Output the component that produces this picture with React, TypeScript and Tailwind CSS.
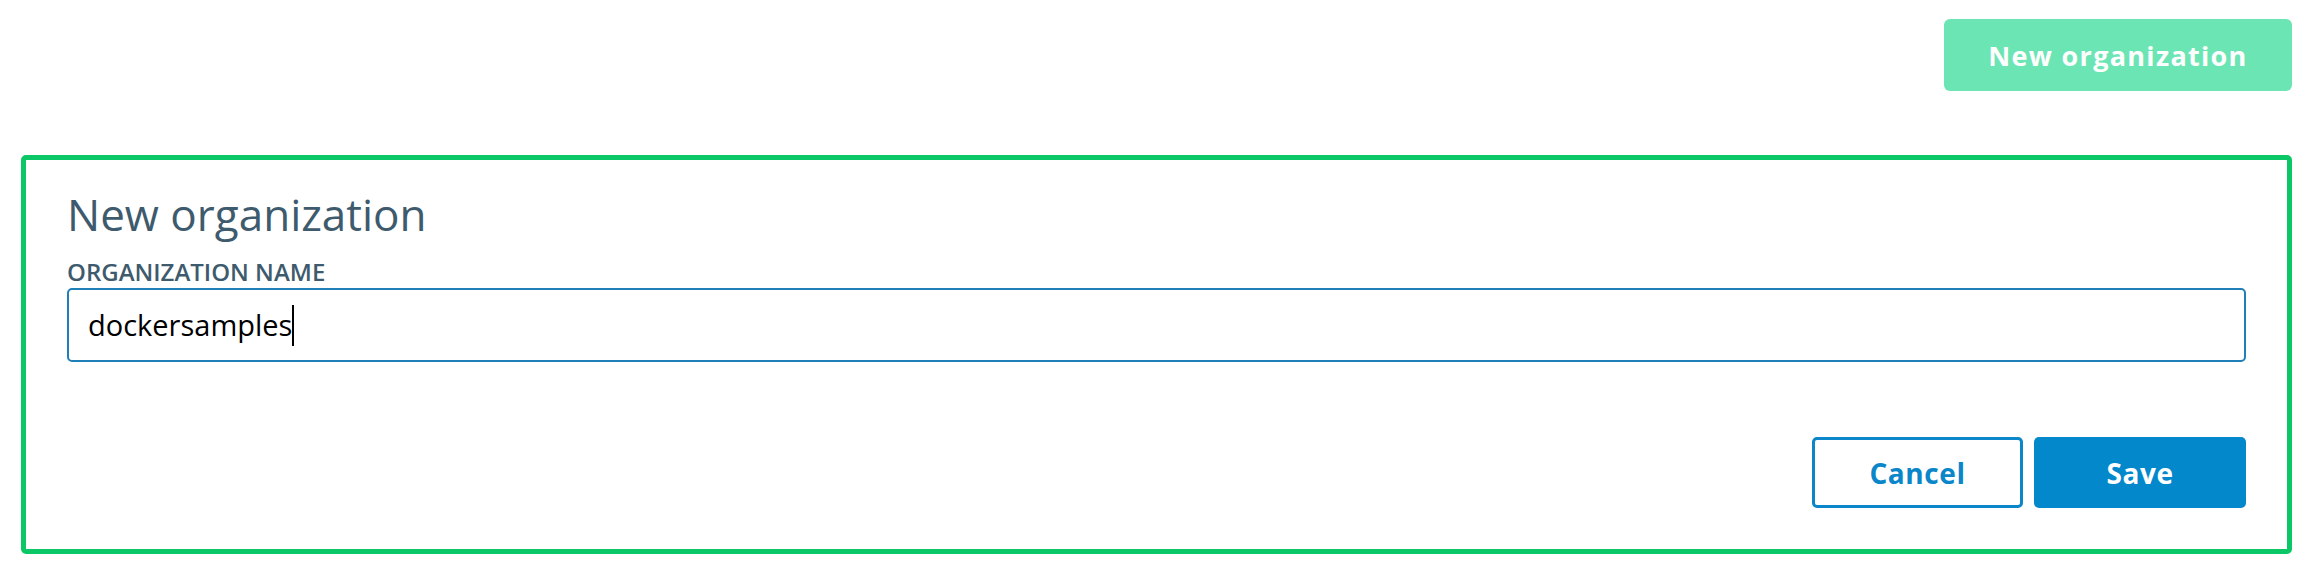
export default function App() {
    return (
        <div className="w-full h-[572px] bg-white font-['Open_Sans',sans-serif]">
            <div className="flex justify-end pt-[19px] pr-[22px]">
                <button type="button" className="w-[348px] h-[72px] rounded-[6px] bg-[#6ce5b4] text-white font-bold text-[27px] tracking-[1.3px] leading-none">
                    New organization
                </button>
            </div>

            <div className="mt-[64px] ml-[21px] mr-[22px] border-[5px] border-[#0cc766] rounded-[5px] px-[41px] pb-[41px]">
                <h2 className="pt-[28px] text-[44px] leading-[52px] text-[#3e5a6d]">
                    New organization
                </h2>
                <label className="block mt-[16px] text-[24px] leading-[32px] font-semibold text-[#3e5a6d]">
                    ORGANIZATION NAME
                </label>
                <div className="h-[74px] border-2 border-[#1f7fb6] rounded-[5px] pl-[19px] flex items-center text-[29px] text-black">
                    <span>dockersamples</span>
                    <span className="w-[2px] h-[41px] bg-black"></span>
                </div>
                <div className="mt-[75px] flex justify-end gap-[11px]">
                    <button type="button" className="w-[211px] h-[71px] border-[3px] border-[#0a86c9] rounded-[5px] bg-white text-[#0a86c9] font-bold text-[28px] tracking-[0.6px]">
                        Cancel
                    </button>
                    <button type="button" className="w-[212px] h-[71px] rounded-[5px] bg-[#0388cb] text-white font-bold text-[28px] tracking-[0.6px]">
                        Save
                    </button>
                </div>
            </div>
        </div>
    )
}
